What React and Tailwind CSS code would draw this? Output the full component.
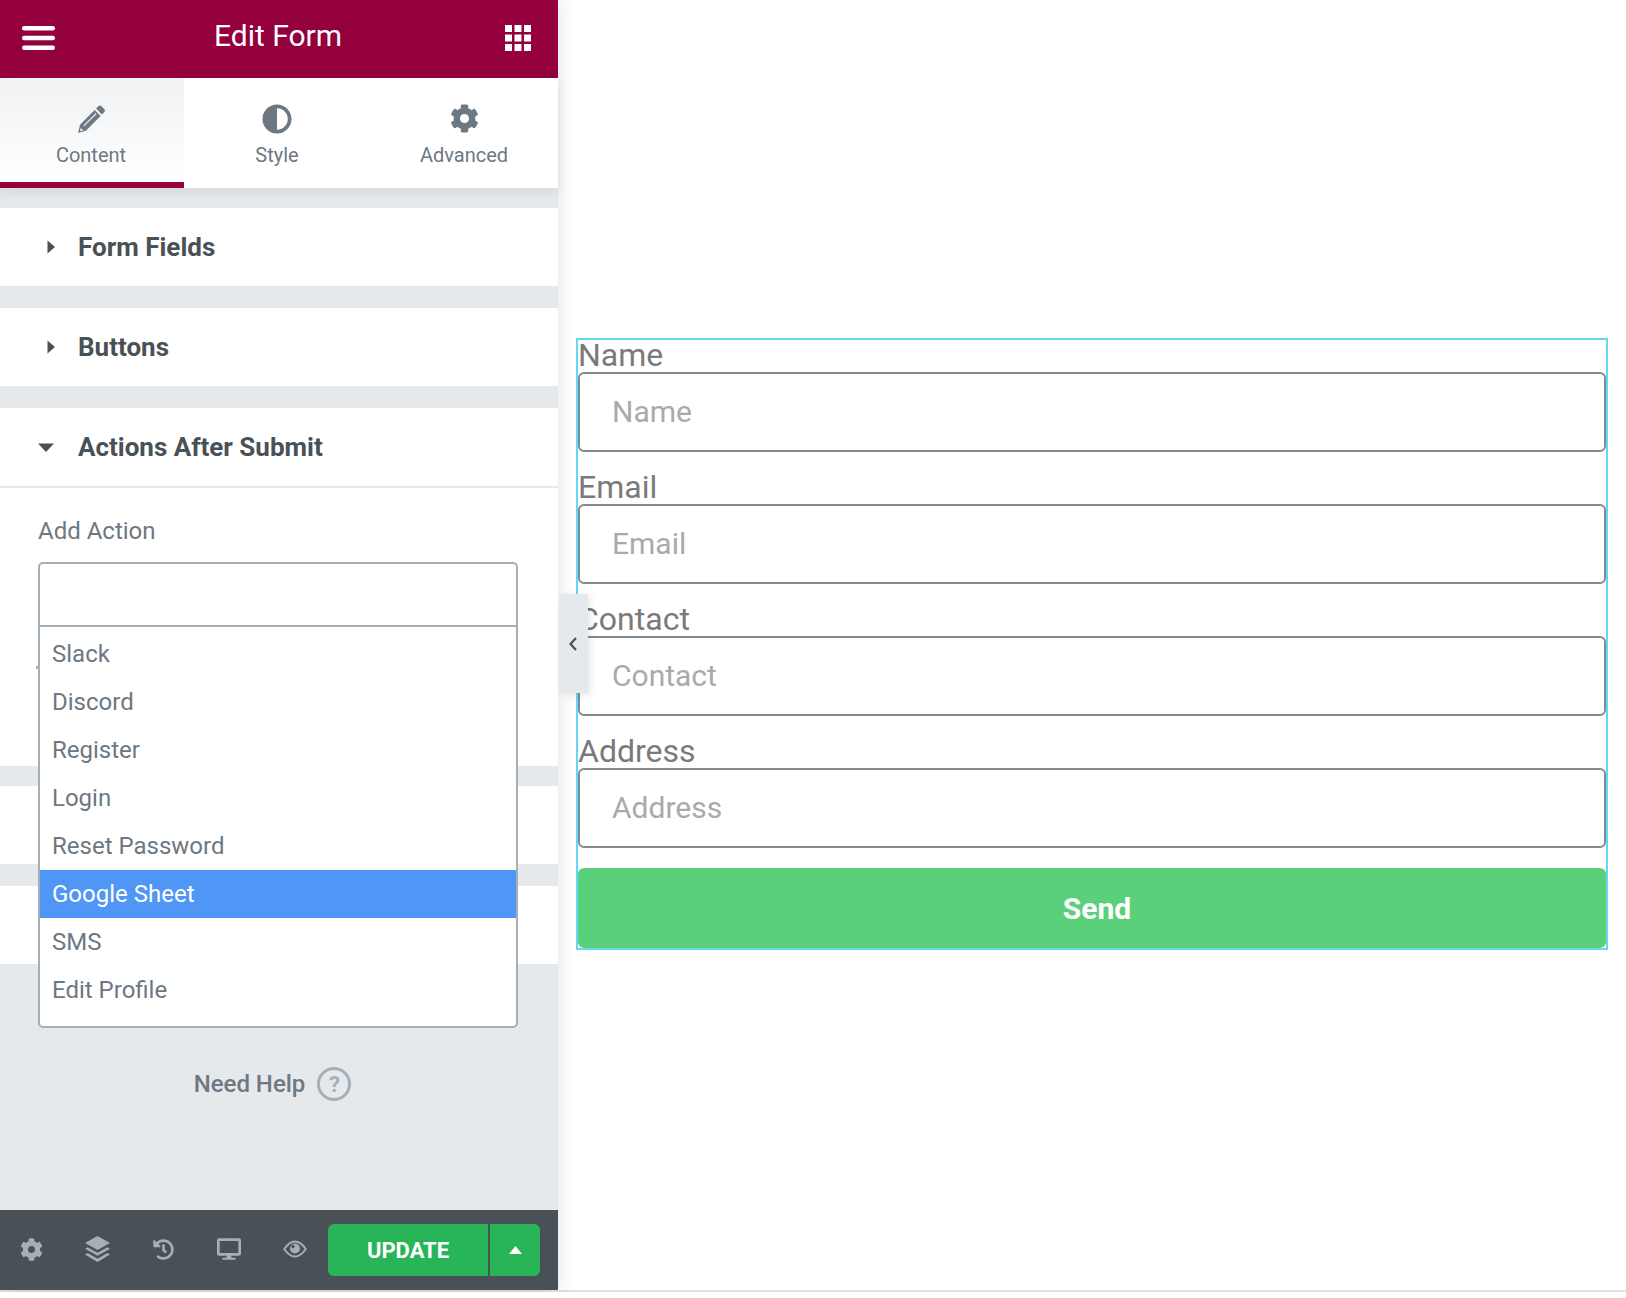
import React from "react";
import { FaCog, FaAdjust, FaHistory, FaDesktop } from "react-icons/fa";

function Hamburger() {
  return (
    <svg width="33" height="24" viewBox="0 0 33 24" fill="#fff">
      <rect x="0" y="0" width="33" height="4.4" rx="2.2" />
      <rect x="0" y="9.8" width="33" height="4.4" rx="2.2" />
      <rect x="0" y="19.6" width="33" height="4.4" rx="2.2" />
    </svg>
  );
}

function GridIcon() {
  const xs = [0, 9.500, 19];
  return (
    <svg width="26" height="26" viewBox="0 0 26 26" fill="#fff">
      {xs.map((y) => xs.map((x) => <rect key={x + "-" + y} x={x} y={y} width="7" height="7" />))}
    </svg>
  );
}

function Pencil() {
  return (
    <svg width="29" height="30" viewBox="0 0 28 29" fill="#6d7882">
      <path d="M20.600 2.200a2.200 2.200 0 0 1 3.100 0l2.600 2.700a2.200 2.200 0 0 1 0 3.100l-2.200 2.200-5.700-5.800z" />
      <path d="M17 5.800l5.800 5.800L8.600 25.800 1 28l1.900-8z" />
      <path d="M18.500 9.200L6.600 21.100" stroke="#eef0f2" strokeWidth="1.100" fill="none" />
      <path d="M3.600 23.200l2.400 2.400-3.100.7z" fill="#f4f5f6" />
    </svg>
  );
}

function Layers() {
  return (
    <svg width="25" height="26" viewBox="0 0 25 26" fill="#a4afb7">
      <path d="M12.500 0L25 7 12.500 14 0 7z" />
      <path d="M2.600 11.200L0 12.700l12.500 7 12.500-7-2.600-1.500-9.900 5.500z" />
      <path d="M2.600 17L0 18.600 12.500 26 25 18.600 22.400 17l-9.900 5.700z" />
    </svg>
  );
}

function Eye() {
  return (
    <svg width="24" height="18" viewBox="0 0 24 18">
      <path
        d="M1.200 9C5 3.500 8 1.500 12 1.500S19 3.500 22.800 9C19 14.500 16 16.500 12 16.500S5 14.500 1.200 9z"
        fill="none"
        stroke="#a4afb7"
        strokeWidth="2"
      />
      <circle cx="12" cy="8.500" r="5" fill="#a4afb7" />
      <circle cx="10" cy="6.500" r="1.700" fill="#495157" />
    </svg>
  );
}

function Caret({ dir }) {
  if (dir === "right") {
    return (
      <svg width="8" height="14" viewBox="0 0 8 14" fill="#495157">
        <path d="M0.500 0.500L8 7l-7.500 6.500z" />
      </svg>
    );
  }
  return (
    <svg width="16" height="9" viewBox="0 0 16 9" fill="#495157">
      <path d="M0 0.500h16L8 9z" />
    </svg>
  );
}

function Tab({ label, active, children }) {
  return (
    <div
      className={
        "relative flex flex-col items-center pt-[26px] " +
        (active ? "bg-gradient-to-b from-[#eff1f3] to-white border-b-[6px] border-[#93003c] pr-[2px]" : "")
      }
    >
      <div className="flex h-[29px] items-center justify-center text-[#6d7882]">{children}</div>
      <div className="mt-[10px] text-[20px] leading-[24px] text-[#6d7882]">{label}</div>
    </div>
  );
}

function Section({ title }) {
  return (
    <div className="flex h-[78px] items-center bg-white pl-[47px]">
      <Caret dir="right" />
      <span className="ml-[23px] text-[26px] font-bold text-[#495157]">{title}</span>
    </div>
  );
}

const actions = ["Slack", "Discord", "Register", "Login", "Reset Password", "Google Sheet", "SMS", "Edit Profile"];

function Field({ label }) {
  return (
    <div className="flex flex-col">
      <label className="h-[32px] text-[32px] leading-[30px] text-[#7a7a7a]">{label}</label>
      <input
        placeholder={label}
        className="h-[80px] w-full rounded-[6px] border-2 border-[#818a91] bg-white px-[32px] pb-[1px] text-[30px] outline-none placeholder:text-[#aaaaaa]"
      />
    </div>
  );
}

export default function App() {
  return (
    <div className="[font-family:Roboto,sans-serif] bg-white">
      <div className="flex h-[1290px]">
        <aside className="relative z-10 flex w-[558px] shrink-0 flex-col bg-[#e6e9ec] shadow-[0_0_18px_rgba(0,0,0,0.12)]">
          <header className="flex h-[78px] shrink-0 items-center justify-between bg-[#93003c] pb-[3px] pl-[22px] pr-[27px]">
            <Hamburger />
            <h1 className="mb-[3px] mr-[4px] text-[30px] leading-[60px] text-white">Edit Form</h1>
            <GridIcon />
          </header>

          <div className="relative grid h-[110px] shrink-0 grid-cols-[184px_186px_188px] bg-white shadow-[0_4px_10px_rgba(0,0,0,0.08)]">
            <Tab label="Content" active>
              <Pencil />
            </Tab>
            <Tab label="Style">
              <FaAdjust size={30} />
            </Tab>
            <Tab label="Advanced">
              <FaCog size={29} />
            </Tab>
          </div>

          <div className="flex flex-col pt-[20px]">
            <Section title="Form Fields" />
            <div className="h-[22px]" />
            <Section title="Buttons" />
            <div className="h-[22px]" />
            <div className="relative h-[358px] bg-white">
              <div className="flex h-[80px] items-center border-b-2 border-[#e6e9ec] pl-[38px]">
                <Caret dir="down" />
                <span className="ml-[24px] text-[26px] font-bold text-[#495157]">Actions After Submit</span>
              </div>
              <div className="pl-[38px] pt-[27px] text-[24px] leading-[32px] text-[#6d7882]">Add Action</div>

              <span className="absolute left-[36px] top-[258px] h-[3px] w-[2px] bg-[#a4afb7]" />

              <div className="absolute left-[38px] top-[154px] z-20 flex h-[466px] w-[480px] flex-col rounded-[5px] border-2 border-[#a4afb7] bg-white">
                <div className="h-[63px] shrink-0 border-b-2 border-[#a4afb7]" />
                <ul className="pt-[3px]">
                  {actions.map((a) => (
                    <li
                      key={a}
                      className={
                        "flex h-[48px] items-center pl-[12px] text-[24px] " +
                        (a === "Google Sheet" ? "bg-[#5096f6] text-white" : "text-[#6d7882]")
                      }
                    >
                      {a}
                    </li>
                  ))}
                </ul>
              </div>
            </div>
            <div className="h-[20px]" />
            <div className="h-[78px] bg-white" />
            <div className="h-[22px]" />
            <div className="h-[78px] bg-white" />
          </div>

          <div className="flex flex-1 items-start justify-center pr-[13px] pt-[103px]">
            <span className="text-[24px] font-medium leading-[34px] text-[#6d7882]">Need Help</span>
            <span className="ml-[12px] flex h-[34px] w-[34px] items-center justify-center rounded-full border-[3px] border-[#a4afb7] text-[22px] font-bold text-[#a4afb7]">
              ?
            </span>
          </div>

          <footer className="flex h-[80px] shrink-0 items-center bg-[#495157]">
            <div className="-ml-[2px] mb-[2px] grid w-[330px] grid-cols-5 items-center text-[#a4afb7]">
              <FaCog size={23} className="justify-self-center" />
              <span className="justify-self-center">
                <Layers />
              </span>
              <FaHistory size={21} className="justify-self-center" />
              <FaDesktop size={24} className="justify-self-center" />
              <span className="justify-self-center">
                <Eye />
              </span>
            </div>
            <div className="flex h-[52px]">
              <button className="flex h-full w-[160px] items-center justify-center rounded-l-[6px] bg-[#28b557] text-[22px] font-bold uppercase text-white">
                Update
              </button>
              <button className="ml-[2px] flex h-full w-[50px] items-center justify-center rounded-r-[6px] bg-[#28b557]">
                <svg width="13" height="8" viewBox="0 0 13 8" fill="#fff">
                  <path d="M6.500 0L13 8H0z" />
                </svg>
              </button>
            </div>
          </footer>
        </aside>

        <main className="relative min-w-0 flex-1 pl-[18px] pr-[18px] pt-[338px]">
          <form className="flex flex-col gap-[20px] border-2 border-[#66d8f6]">
            <Field label="Name" />
            <Field label="Email" />
            <Field label="Contact" />
            <Field label="Address" />
            <button
              type="button"
              className="h-[80px] w-full rounded-[6px] bg-[#5ad07a] pl-[10px] text-[30px] font-bold text-white"
            >
              Send
            </button>
          </form>

          <div className="absolute left-[2px] top-[594px] z-10 flex h-[99px] w-[28px] items-center justify-center bg-[#e6e9ec] pr-[2px] shadow-[2px_2px_8px_rgba(0,0,0,0.1)]">
            <svg width="10" height="16" viewBox="0 0 10 16" fill="none" stroke="#495157" strokeWidth="2.200">
              <path d="M8 2L2.500 8 8 14" />
            </svg>
          </div>
        </main>
      </div>
      <div className="h-[2px] bg-[#dfe1e5]" />
    </div>
  );
}
